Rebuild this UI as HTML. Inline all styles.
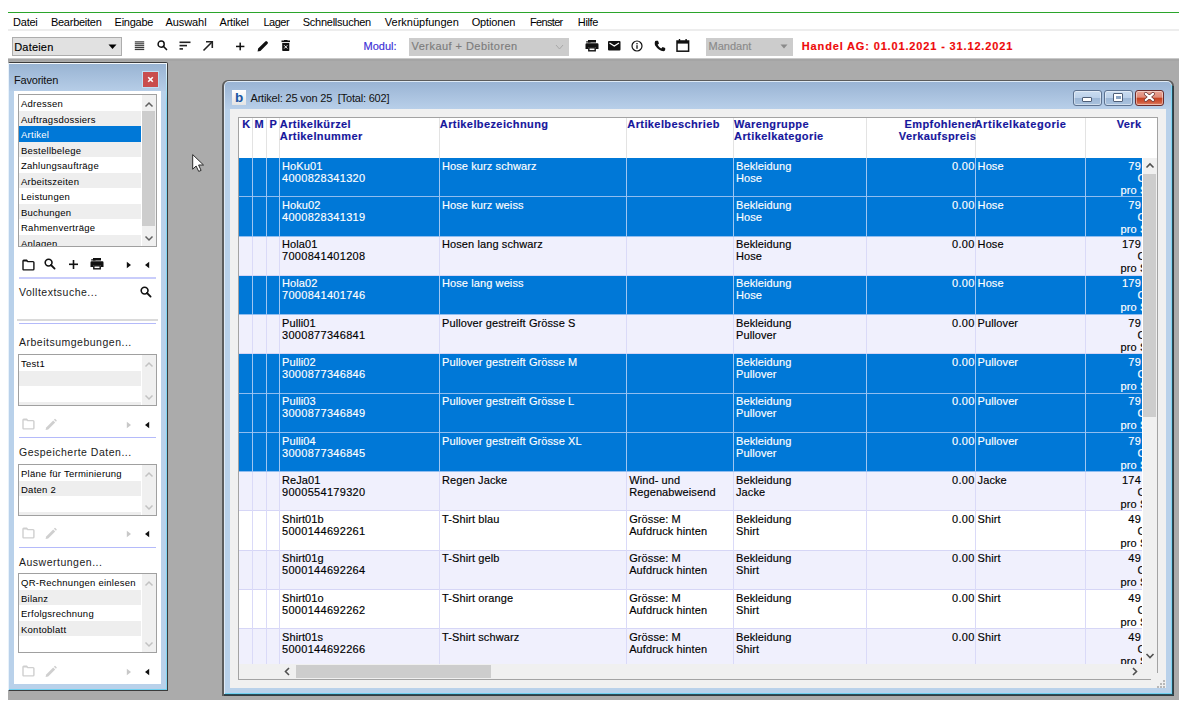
<!DOCTYPE html><html><head><meta charset="utf-8"><style>
*{box-sizing:border-box;margin:0;padding:0}
html,body{width:1187px;height:706px;overflow:hidden;background:#fff}
body{position:relative;font-family:"Liberation Sans",sans-serif;color:#000}
.ab{position:absolute}
.t{position:absolute;white-space:pre;line-height:12px}
.v{font-size:11px;letter-spacing:0.1px;-webkit-text-stroke:0.15px}
.vd{letter-spacing:0.3px}
.vb{font-size:11px;font-weight:bold;letter-spacing:0.4px;-webkit-text-stroke:0.15px}
.menu{font-size:11px;letter-spacing:-0.25px;line-height:13px;color:#000}
.sb{font-size:9.5px;letter-spacing:0.25px;line-height:12px}
</style></head><body>
<div class="ab" style="left:8px;top:12px;width:1171px;height:1px;background:#2ba52b"></div>
<div class="t menu" style="left:13.1px;top:15.5px;letter-spacing:-0.25px">Datei</div>
<div class="t menu" style="left:50.9px;top:15.5px;letter-spacing:-0.25px">Bearbeiten</div>
<div class="t menu" style="left:114.6px;top:15.5px;letter-spacing:-0.25px">Eingabe</div>
<div class="t menu" style="left:165.6px;top:15.5px;letter-spacing:-0.10px">Auswahl</div>
<div class="t menu" style="left:219.5px;top:15.5px;letter-spacing:-0.20px">Artikel</div>
<div class="t menu" style="left:263.5px;top:15.5px;letter-spacing:-0.50px">Lager</div>
<div class="t menu" style="left:302.7px;top:15.5px;letter-spacing:-0.25px">Schnellsuchen</div>
<div class="t menu" style="left:384.8px;top:15.5px;letter-spacing:0.00px">Verknüpfungen</div>
<div class="t menu" style="left:471.7px;top:15.5px;letter-spacing:-0.15px">Optionen</div>
<div class="t menu" style="left:529.9px;top:15.5px;letter-spacing:-0.65px">Fenster</div>
<div class="t menu" style="left:577.8px;top:15.5px;letter-spacing:-0.35px">Hilfe</div>
<div class="ab" style="left:8px;top:29px;width:1171px;height:2px;background:#ededed"></div>
<div class="ab" style="left:12px;top:37px;width:110px;height:19px;background:#e1e1e1;border:1px solid #adadad"></div>
<div class="t v" style="left:14.2px;top:40.5px;letter-spacing:0.2px">Dateien</div>
<svg class="ab" style="left:108px;top:44px" width="9" height="6"><path d="M0.5 0.5 L8.5 0.5 L4.5 5 Z" fill="#000"/></svg>
<svg class="ab" style="left:134px;top:41px" width="11" height="10" viewBox="0 0 11 10" ><rect x="0.8" y="0.3" width="9.4" height="1.2" fill="#3a3a3a"/><rect x="0.8" y="2.1999999999999997" width="9.4" height="1.2" fill="#3a3a3a"/><rect x="0.8" y="4.1" width="9.4" height="1.2" fill="#3a3a3a"/><rect x="0.8" y="5.999999999999999" width="9.4" height="1.2" fill="#3a3a3a"/><rect x="0.8" y="7.8999999999999995" width="9.4" height="1.2" fill="#3a3a3a"/></svg>
<svg class="ab" style="left:156.5px;top:39.8px" width="12" height="12" viewBox="0 0 12 12" ><g transform="scale(0.9)"><circle cx="4.6" cy="4.6" r="3.4" fill="none" stroke="#111" stroke-width="1.6"/><path d="M7 7 L10.6 10.6" stroke="#111" stroke-width="1.8" stroke-linecap="round"/></g></svg>
<svg class="ab" style="left:179px;top:41px" width="12" height="10" viewBox="0 0 12 10" ><rect x="0.5" y="0.5" width="11" height="1.6" fill="#222"/><rect x="0.5" y="3.8" width="7.5" height="1.6" fill="#222"/><rect x="0.5" y="7.1" width="3.5" height="1.6" fill="#222"/></svg>
<svg class="ab" style="left:202px;top:40px" width="12" height="12" viewBox="0 0 12 12" ><path d="M1.5 10.5 L10 2" stroke="#222" stroke-width="1.6"/><path d="M4 1.8 L10.3 1.8 L10.3 8" fill="none" stroke="#222" stroke-width="1.6"/></svg>
<svg class="ab" style="left:235px;top:42px" width="10" height="9" viewBox="0 0 10 9" ><rect x="1" y="3.7" width="8.4" height="1.5" fill="#111"/><rect x="4.45" y="0.6" width="1.5" height="7.7" fill="#111"/></svg>
<svg class="ab" style="left:257px;top:40px" width="12" height="12" viewBox="0 0 12 12" ><path d="M0.6 11.4 L1.1 8.6 L8.3 1.4 Q9.2 0.6 10 1.4 L10.6 2 Q11.4 2.8 10.6 3.7 L3.4 10.9 Z" fill="#111"/></svg>
<svg class="ab" style="left:281px;top:40px" width="10" height="12" viewBox="0 0 10 12" ><rect x="0.5" y="0.5" width="8.5" height="1.6" fill="#111"/><rect x="3" y="0" width="3.5" height="1" fill="#111"/><path d="M1.2 3 H8.3 V10.2 Q8.3 11 7.5 11 H2 Q1.2 11 1.2 10.2 Z" fill="#111"/><path d="M3.2 5.3 L6.3 8.5 M6.3 5.3 L3.2 8.5" stroke="#fff" stroke-width="1"/></svg>
<div class="t v" style="left:363.5px;top:40.3px;color:#3b2ed6;letter-spacing:0px">Modul:</div>
<div class="ab" style="left:409px;top:38px;width:160px;height:18px;background:#cccccc"></div>
<div class="t v" style="left:411.6px;top:40.3px;color:#7c7c7c;letter-spacing:0.45px">Verkauf + Debitoren</div>
<svg class="ab" style="left:555px;top:44px" width="10" height="7" viewBox="0 0 10 7" ><path d="M1 1 L4.5 5 L8 1" fill="none" stroke="#a8a8a8" stroke-width="1"/></svg>
<svg class="ab" style="left:585px;top:40px" width="14" height="12" viewBox="0 0 14 12" ><rect x="3" y="0" width="8" height="2.5" fill="#111"/><path d="M1.6 3.2 H12.4 Q13.5 3.2 13.5 4.5 V9 H11 V7 H3 V9 H0.5 V4.5 Q0.5 3.2 1.6 3.2 Z" fill="#111"/><rect x="3.8" y="7.8" width="6.4" height="3" fill="none" stroke="#111" stroke-width="1.4"/><path d="M1.2 1.2 H4.6 L5.8 2.6 H1.2 Z" fill="#111"/></svg>
<svg class="ab" style="left:608px;top:41px" width="13" height="10" viewBox="0 0 13 10" ><rect x="0" y="0" width="12.5" height="9.5" rx="1" fill="#111"/><path d="M1.5 2 L6.25 5 L11 2" fill="none" stroke="#fff" stroke-width="1.2"/></svg>
<svg class="ab" style="left:631px;top:40px" width="13" height="12" viewBox="0 0 13 12" ><circle cx="6" cy="6" r="5" fill="none" stroke="#111" stroke-width="1.2"/><rect x="5.35" y="5.2" width="1.3" height="3.6" fill="#111"/><rect x="5.35" y="3" width="1.3" height="1.3" fill="#111"/></svg>
<svg class="ab" style="left:654px;top:40px" width="12" height="12" viewBox="0 0 12 12" ><path d="M2.2 0.8 L4 0.8 L5 3.4 L3.6 4.8 Q5 7.6 7.2 8.4 L8.6 7 L11.2 8 L11.2 9.8 Q11 11.2 9.6 11.2 Q4.5 10.6 1 5.2 Q0.6 3.6 0.8 2.2 Q1 0.8 2.2 0.8 Z" fill="#111"/></svg>
<svg class="ab" style="left:676px;top:39px" width="14" height="13" viewBox="0 0 14 13" ><rect x="1" y="2" width="11.6" height="10.2" fill="none" stroke="#111" stroke-width="1.5"/><rect x="1" y="2" width="11.6" height="2.6" fill="#111"/><rect x="2.8" y="0" width="1.4" height="2.5" fill="#111"/><rect x="9.4" y="0" width="1.4" height="2.5" fill="#111"/></svg>
<div class="ab" style="left:706px;top:38px;width:87px;height:18px;background:#cccccc"></div>
<div class="t v" style="left:708.5px;top:40.3px;color:#8a8a8a;letter-spacing:0px">Mandant</div>
<svg class="ab" style="left:780px;top:44px" width="8" height="5" viewBox="0 0 8 5" ><path d="M0.5 0.5 L7.5 0.5 L4 4.5 Z" fill="#8a8a8a"/></svg>
<div class="t vb" style="left:801.8px;top:40.3px;color:#ee0a0a;letter-spacing:0.85px">Handel AG: 01.01.2021 - 31.12.2021</div>
<div class="ab" style="left:8px;top:58px;width:1171px;height:642px;background:#ababab"></div>
<div class="ab" style="left:8px;top:58px;width:1171px;height:1px;background:#c9c9c9"></div>
<div class="ab" style="left:8px;top:59px;width:1171px;height:2px;background:#a5a5a5"></div>
<div class="ab" style="left:8px;top:62px;width:160px;height:629px;background:#b9d1ea;border-top:1px solid #3c3c3c;border-right:1px solid #3c3c3c;border-bottom:1px solid #3c3c3c;border-left:1px solid #e8f2fb;border-radius:2px 2px 0 0"></div>
<div class="ab" style="left:9px;top:63px;width:158px;height:1px;background:#f4f8fc"></div>
<div class="ab" style="left:166px;top:63px;width:1px;height:627px;background:linear-gradient(#f4f8fc 0px,#7fd6f2 40px,#7fd6f2 100%)"></div>
<div class="ab" style="left:9px;top:689px;width:158px;height:1px;background:#6fd0f0"></div>
<div class="ab" style="left:9px;top:64px;width:157px;height:27px;background:linear-gradient(#99b4d3,#b6cde7)"></div>
<div class="t" style="left:14px;top:74px;font-size:11px;line-height:13px;letter-spacing:-0.2px;color:#101010">Favoriten</div>
<div class="ab" style="left:143px;top:72px;width:15px;height:15px;background:#c94d4d;box-shadow:0 0 0 1px #bfe0f5"></div>
<svg class="ab" style="left:146px;top:75px" width="9" height="9" viewBox="0 0 9 9" ><path d="M2.2 2.2 L6.8 6.8 M6.8 2.2 L2.2 6.8" stroke="#fff" stroke-width="1.6"/></svg>
<div class="ab" style="left:14px;top:91px;width:147px;height:593px;background:#fff"></div>
<div class="ab" style="left:18px;top:94px;width:139px;height:153px;border:1px solid #a0a0a0;background:#fff;overflow:hidden">
<div class="ab" style="left:0;top:0.0px;width:122px;height:15.5px;background:#ffffff"></div>
<div class="t sb" style="left:2px;top:3.2px;color:#000">Adressen</div>
<div class="ab" style="left:0;top:15.5px;width:122px;height:15.5px;background:#eeeeee"></div>
<div class="t sb" style="left:2px;top:18.7px;color:#000">Auftragsdossiers</div>
<div class="ab" style="left:0;top:31.0px;width:122px;height:15.5px;background:#0078d7"></div>
<div class="t sb" style="left:2px;top:34.2px;color:#fff">Artikel</div>
<div class="ab" style="left:0;top:46.5px;width:122px;height:15.5px;background:#eeeeee"></div>
<div class="t sb" style="left:2px;top:49.7px;color:#000">Bestellbelege</div>
<div class="ab" style="left:0;top:62.0px;width:122px;height:15.5px;background:#ffffff"></div>
<div class="t sb" style="left:2px;top:65.2px;color:#000">Zahlungsaufträge</div>
<div class="ab" style="left:0;top:77.5px;width:122px;height:15.5px;background:#eeeeee"></div>
<div class="t sb" style="left:2px;top:80.7px;color:#000">Arbeitszeiten</div>
<div class="ab" style="left:0;top:93.0px;width:122px;height:15.5px;background:#ffffff"></div>
<div class="t sb" style="left:2px;top:96.2px;color:#000">Leistungen</div>
<div class="ab" style="left:0;top:108.5px;width:122px;height:15.5px;background:#eeeeee"></div>
<div class="t sb" style="left:2px;top:111.7px;color:#000">Buchungen</div>
<div class="ab" style="left:0;top:124.0px;width:122px;height:15.5px;background:#ffffff"></div>
<div class="t sb" style="left:2px;top:127.2px;color:#000">Rahmenverträge</div>
<div class="ab" style="left:0;top:139.5px;width:122px;height:15.5px;background:#eeeeee"></div>
<div class="t sb" style="left:2px;top:142.7px;color:#000">Anlagen</div>
<div class="ab" style="left:122.5px;top:0;width:15px;height:153px;background:#f0f0f0"></div>
<svg class="ab" style="left:125px;top:6px" width="10" height="7"><path d="M1.5 5.5 L5 2 L8.5 5.5" fill="none" stroke="#606060" stroke-width="1.5"/></svg>
<svg class="ab" style="left:125px;top:140px" width="10" height="7"><path d="M1.5 1.5 L5 5 L8.5 1.5" fill="none" stroke="#606060" stroke-width="1.5"/></svg>
<div class="ab" style="left:122.5px;top:16px;width:13px;height:115px;background:#cdcdcd"></div>
</div>
<svg class="ab" style="left:22px;top:259px" width="13" height="12" viewBox="0 0 13 12" ><path d="M1.8 1.2 H4.6 L5.8 2.6 H11 Q11.9 2.6 11.9 3.5 V10 Q11.9 10.9 11 10.9 H1.9 Q1 10.9 1 10 V2 Q1 1.2 1.8 1.2 Z" fill="none" stroke="#111" stroke-width="1.4"/><path d="M1.2 1.2 H4.6 L5.8 2.6 H1.2 Z" fill="#111"/></svg>
<svg class="ab" style="left:44px;top:258px" width="12" height="12" viewBox="0 0 12 12" ><g transform="scale(1.0)"><circle cx="4.6" cy="4.6" r="3.4" fill="none" stroke="#111" stroke-width="1.6"/><path d="M7 7 L10.6 10.6" stroke="#111" stroke-width="1.8" stroke-linecap="round"/></g></svg>
<svg class="ab" style="left:68px;top:259px" width="11" height="11" viewBox="0 0 11 11" ><rect x="1" y="4.5" width="9" height="1.6" fill="#111"/><rect x="4.7" y="1" width="1.6" height="9" fill="#111"/></svg>
<svg class="ab" style="left:90px;top:258px" width="14" height="12" viewBox="0 0 14 12" ><rect x="3" y="0" width="8" height="2.5" fill="#111"/><path d="M1.6 3.2 H12.4 Q13.5 3.2 13.5 4.5 V9 H11 V7 H3 V9 H0.5 V4.5 Q0.5 3.2 1.6 3.2 Z" fill="#111"/><rect x="3.8" y="7.8" width="6.4" height="3" fill="none" stroke="#111" stroke-width="1.4"/><path d="M1.2 1.2 H4.6 L5.8 2.6 H1.2 Z" fill="#111"/></svg>
<svg class="ab" style="left:126px;top:261px" width="6" height="8" viewBox="0 0 6 8" ><path d="M0.8 0.8 L5 4 L0.8 7.2 Z" fill="#111"/></svg>
<svg class="ab" style="left:144px;top:261px" width="6" height="8" viewBox="0 0 6 8" ><path d="M5.2 0.8 L1 4 L5.2 7.2 Z" fill="#111"/></svg>
<div class="ab" style="left:19px;top:277px;width:137px;height:2px;background:#c9cdfb"></div>
<div class="t" style="left:19px;top:286px;font-size:10.5px;line-height:12px;letter-spacing:0.5px;color:#1a1a1a">Volltextsuche...</div>
<svg class="ab" style="left:140px;top:286px" width="12" height="12" viewBox="0 0 12 12" ><g transform="scale(1.0)"><circle cx="4.6" cy="4.6" r="3.4" fill="none" stroke="#111" stroke-width="1.6"/><path d="M7 7 L10.6 10.6" stroke="#111" stroke-width="1.8" stroke-linecap="round"/></g></svg>
<div class="ab" style="left:17px;top:319px;width:141px;height:2px;background:#dadada"></div>
<div class="ab" style="left:19px;top:323px;width:137px;height:1px;background:#b4bafa"></div>
<div class="t" style="left:19px;top:336px;font-size:10.5px;line-height:12px;letter-spacing:0.5px;color:#1a1a1a">Arbeitsumgebungen...</div>
<div class="ab" style="left:18px;top:354px;width:139px;height:52px;border:1px solid #a0a0a0;background:#fff;overflow:hidden">
<div class="ab" style="left:0;top:0.0px;width:122px;height:15.5px;background:#ffffff"></div>
<div class="t sb" style="left:2px;top:3.2px;color:#000">Test1</div>
<div class="ab" style="left:0;top:15.5px;width:122px;height:15.5px;background:#eeeeee"></div>
<div class="ab" style="left:0;top:31.0px;width:122px;height:15.5px;background:#ffffff"></div>
<div class="ab" style="left:0;top:46.5px;width:122px;height:15.5px;background:#eeeeee"></div>
<div class="ab" style="left:122.5px;top:0;width:15px;height:52px;background:#f0f0f0"></div>
<svg class="ab" style="left:125px;top:6px" width="10" height="7"><path d="M1.5 5.5 L5 2 L8.5 5.5" fill="none" stroke="#c2c2c2" stroke-width="1.5"/></svg>
<svg class="ab" style="left:125px;top:39px" width="10" height="7"><path d="M1.5 1.5 L5 5 L8.5 1.5" fill="none" stroke="#c2c2c2" stroke-width="1.5"/></svg>
</div>
<svg class="ab" style="left:22px;top:418px" width="13" height="12" viewBox="0 0 13 12" ><path d="M1.8 1.2 H4.6 L5.8 2.6 H11 Q11.9 2.6 11.9 3.5 V10 Q11.9 10.9 11 10.9 H1.9 Q1 10.9 1 10 V2 Q1 1.2 1.8 1.2 Z" fill="none" stroke="#cfcfcf" stroke-width="1.4"/><path d="M1.2 1.2 H4.6 L5.8 2.6 H1.2 Z" fill="#cfcfcf"/></svg>
<svg class="ab" style="left:45px;top:418px" width="12" height="13" viewBox="0 0 12 13" ><path d="M0.6 12 L1.2 9.4 L8.2 2.4 L10.2 4.4 L3.2 11.4 Z" fill="#cfcfcf"/><path d="M8.9 1.7 L9.6 1 Q10 0.6 10.4 1 L11.6 2.2 Q12 2.6 11.6 3 L10.9 3.7 Z" fill="#cfcfcf"/></svg>
<svg class="ab" style="left:126px;top:421px" width="6" height="8" viewBox="0 0 6 8" ><path d="M0.8 0.8 L5 4 L0.8 7.2 Z" fill="#c8c8c8"/></svg>
<svg class="ab" style="left:144px;top:421px" width="6" height="8" viewBox="0 0 6 8" ><path d="M5.2 0.8 L1 4 L5.2 7.2 Z" fill="#111"/></svg>
<div class="ab" style="left:19px;top:437px;width:137px;height:1px;background:#b4bafa"></div>
<div class="t" style="left:19px;top:446px;font-size:10.5px;line-height:12px;letter-spacing:0.5px;color:#1a1a1a">Gespeicherte Daten...</div>
<div class="ab" style="left:18px;top:464px;width:139px;height:52px;border:1px solid #a0a0a0;background:#fff;overflow:hidden">
<div class="ab" style="left:0;top:0.0px;width:122px;height:15.5px;background:#ffffff"></div>
<div class="t sb" style="left:2px;top:3.2px;color:#000">Pläne für Terminierung</div>
<div class="ab" style="left:0;top:15.5px;width:122px;height:15.5px;background:#eeeeee"></div>
<div class="t sb" style="left:2px;top:18.7px;color:#000">Daten 2</div>
<div class="ab" style="left:0;top:31.0px;width:122px;height:15.5px;background:#ffffff"></div>
<div class="ab" style="left:0;top:46.5px;width:122px;height:15.5px;background:#eeeeee"></div>
<div class="ab" style="left:122.5px;top:0;width:15px;height:52px;background:#f0f0f0"></div>
<svg class="ab" style="left:125px;top:6px" width="10" height="7"><path d="M1.5 5.5 L5 2 L8.5 5.5" fill="none" stroke="#c2c2c2" stroke-width="1.5"/></svg>
<svg class="ab" style="left:125px;top:39px" width="10" height="7"><path d="M1.5 1.5 L5 5 L8.5 1.5" fill="none" stroke="#c2c2c2" stroke-width="1.5"/></svg>
</div>
<svg class="ab" style="left:22px;top:527px" width="13" height="12" viewBox="0 0 13 12" ><path d="M1.8 1.2 H4.6 L5.8 2.6 H11 Q11.9 2.6 11.9 3.5 V10 Q11.9 10.9 11 10.9 H1.9 Q1 10.9 1 10 V2 Q1 1.2 1.8 1.2 Z" fill="none" stroke="#cfcfcf" stroke-width="1.4"/><path d="M1.2 1.2 H4.6 L5.8 2.6 H1.2 Z" fill="#cfcfcf"/></svg>
<svg class="ab" style="left:45px;top:527px" width="12" height="13" viewBox="0 0 12 13" ><path d="M0.6 12 L1.2 9.4 L8.2 2.4 L10.2 4.4 L3.2 11.4 Z" fill="#cfcfcf"/><path d="M8.9 1.7 L9.6 1 Q10 0.6 10.4 1 L11.6 2.2 Q12 2.6 11.6 3 L10.9 3.7 Z" fill="#cfcfcf"/></svg>
<svg class="ab" style="left:126px;top:530px" width="6" height="8" viewBox="0 0 6 8" ><path d="M0.8 0.8 L5 4 L0.8 7.2 Z" fill="#c8c8c8"/></svg>
<svg class="ab" style="left:144px;top:530px" width="6" height="8" viewBox="0 0 6 8" ><path d="M5.2 0.8 L1 4 L5.2 7.2 Z" fill="#111"/></svg>
<div class="ab" style="left:19px;top:547px;width:137px;height:1px;background:#b4bafa"></div>
<div class="t" style="left:19px;top:556px;font-size:10.5px;line-height:12px;letter-spacing:0.5px;color:#1a1a1a">Auswertungen...</div>
<div class="ab" style="left:18px;top:573px;width:139px;height:80px;border:1px solid #a0a0a0;background:#fff;overflow:hidden">
<div class="ab" style="left:0;top:0.0px;width:122px;height:15.5px;background:#ffffff"></div>
<div class="t sb" style="left:2px;top:3.2px;color:#000">QR-Rechnungen einlesen</div>
<div class="ab" style="left:0;top:15.5px;width:122px;height:15.5px;background:#eeeeee"></div>
<div class="t sb" style="left:2px;top:18.7px;color:#000">Bilanz</div>
<div class="ab" style="left:0;top:31.0px;width:122px;height:15.5px;background:#ffffff"></div>
<div class="t sb" style="left:2px;top:34.2px;color:#000">Erfolgsrechnung</div>
<div class="ab" style="left:0;top:46.5px;width:122px;height:15.5px;background:#eeeeee"></div>
<div class="t sb" style="left:2px;top:49.7px;color:#000">Kontoblatt</div>
<div class="ab" style="left:0;top:62.0px;width:122px;height:15.5px;background:#ffffff"></div>
<div class="ab" style="left:0;top:77.5px;width:122px;height:15.5px;background:#eeeeee"></div>
<div class="ab" style="left:122.5px;top:0;width:15px;height:80px;background:#f0f0f0"></div>
<svg class="ab" style="left:125px;top:6px" width="10" height="7"><path d="M1.5 5.5 L5 2 L8.5 5.5" fill="none" stroke="#c2c2c2" stroke-width="1.5"/></svg>
<svg class="ab" style="left:125px;top:67px" width="10" height="7"><path d="M1.5 1.5 L5 5 L8.5 1.5" fill="none" stroke="#c2c2c2" stroke-width="1.5"/></svg>
</div>
<svg class="ab" style="left:22px;top:665px" width="13" height="12" viewBox="0 0 13 12" ><path d="M1.8 1.2 H4.6 L5.8 2.6 H11 Q11.9 2.6 11.9 3.5 V10 Q11.9 10.9 11 10.9 H1.9 Q1 10.9 1 10 V2 Q1 1.2 1.8 1.2 Z" fill="none" stroke="#cfcfcf" stroke-width="1.4"/><path d="M1.2 1.2 H4.6 L5.8 2.6 H1.2 Z" fill="#cfcfcf"/></svg>
<svg class="ab" style="left:45px;top:665px" width="12" height="13" viewBox="0 0 12 13" ><path d="M0.6 12 L1.2 9.4 L8.2 2.4 L10.2 4.4 L3.2 11.4 Z" fill="#cfcfcf"/><path d="M8.9 1.7 L9.6 1 Q10 0.6 10.4 1 L11.6 2.2 Q12 2.6 11.6 3 L10.9 3.7 Z" fill="#cfcfcf"/></svg>
<svg class="ab" style="left:126px;top:668px" width="6" height="8" viewBox="0 0 6 8" ><path d="M0.8 0.8 L5 4 L0.8 7.2 Z" fill="#c8c8c8"/></svg>
<svg class="ab" style="left:144px;top:668px" width="6" height="8" viewBox="0 0 6 8" ><path d="M5.2 0.8 L1 4 L5.2 7.2 Z" fill="#111"/></svg>
<svg class="ab" style="left:191px;top:153px" width="14" height="20" viewBox="0 0 14 20" ><path d="M1.7 1.6 L1.7 16.2 L5.1 13 L7.7 18.4 L10.1 17.4 L7.6 12 L12.5 12 Z" fill="#fff" stroke="#2a2a2a" stroke-width="1" stroke-linejoin="round"/></svg>
<div class="ab" style="left:222px;top:80px;width:952px;height:616px;background:#5c5c5c;border-radius:6px 6px 0 0"></div>
<div class="ab" style="left:1172px;top:86px;width:2px;height:610px;background:linear-gradient(90deg,#1f5565,#3c3434)"></div>
<div class="ab" style="left:224px;top:694px;width:950px;height:2px;background:linear-gradient(#1f5565,#3c3434)"></div>
<div class="ab" style="left:224px;top:81px;width:948px;height:613px;background:#dfeaf5;border-radius:5px 5px 0 0"></div>
<div class="ab" style="left:1171px;top:85px;width:1px;height:609px;background:#7fd5f3"></div>
<div class="ab" style="left:225px;top:693px;width:947px;height:1px;background:#6fd0f0"></div>
<div class="ab" style="left:225px;top:82px;width:946px;height:611px;background:#b9d1ea;border-radius:4px 4px 0 0"></div>
<div class="ab" style="left:225px;top:82px;width:946px;height:27px;background:linear-gradient(#9ab4d4,#b8cfe9);border-radius:4px 4px 0 0"></div>
<div class="ab" style="left:232px;top:90px;width:14px;height:15px;background:linear-gradient(#ffffff,#e4e4e4)"></div>
<div class="t" style="left:235px;top:89.5px;font-size:13.5px;line-height:15px;font-weight:bold;color:#1a56a4">b</div>
<div class="t" style="left:250.5px;top:91.5px;font-size:11px;line-height:13px;letter-spacing:-0.19px;color:#111">Artikel: 25 von 25  [Total: 602]</div>
<div class="ab" style="left:1073px;top:89.5px;width:29px;height:16px;background:linear-gradient(#cadcf0 0%,#bcd1ea 48%,#9db7d6 52%,#a9c2de 100%);border:1px solid #5d7290;border-radius:3px;box-shadow:inset 0 0 0 1px rgba(255,255,255,0.45)"></div>
<div class="ab" style="left:1104px;top:89.5px;width:29px;height:16px;background:linear-gradient(#cadcf0 0%,#bcd1ea 48%,#9db7d6 52%,#a9c2de 100%);border:1px solid #5d7290;border-radius:3px;box-shadow:inset 0 0 0 1px rgba(255,255,255,0.45)"></div>
<div class="ab" style="left:1135px;top:89.5px;width:29px;height:16px;background:linear-gradient(#e9a495 0%,#e08a78 45%,#c6401f 50%,#d0593c 80%,#e08a70 100%);border:1px solid #6b2b2b;border-radius:3px;box-shadow:inset 0 0 0 1px rgba(255,255,255,0.45)"></div>
<div class="ab" style="left:1082px;top:97px;width:10px;height:4.5px;background:#fff;border:1px solid #4f5f78;border-radius:1px"></div>
<div class="ab" style="left:1113px;top:93px;width:10px;height:8.5px;background:#fff;border:1px solid #4f5f78;border-radius:1px"></div>
<div class="ab" style="left:1115.5px;top:95.5px;width:5px;height:3.5px;background:#8aa4c4"></div>
<svg class="ab" style="left:1143px;top:92px" width="13" height="10" viewBox="0 0 13 10" ><path d="M2.8 1.8 L10 8 M10 1.8 L2.8 8" stroke="#6a3a3a" stroke-width="3.6" stroke-linecap="round"/><path d="M2.8 1.8 L10 8 M10 1.8 L2.8 8" stroke="#fff" stroke-width="2.2" stroke-linecap="round"/></svg>
<div class="ab" style="left:230px;top:109px;width:936px;height:579px;background:#f0f0f0"></div>
<div class="ab" style="left:238px;top:117px;width:920px;height:563px;border:1px solid #a3a3a3;background:#fff"></div>
<div class="ab" style="left:252px;top:118px;width:1px;height:40px;background:#e3e3e3"></div>
<div class="ab" style="left:266px;top:118px;width:1px;height:40px;background:#e3e3e3"></div>
<div class="ab" style="left:279px;top:118px;width:1px;height:40px;background:#e3e3e3"></div>
<div class="ab" style="left:439px;top:118px;width:1px;height:40px;background:#e3e3e3"></div>
<div class="ab" style="left:626px;top:118px;width:1px;height:40px;background:#e3e3e3"></div>
<div class="ab" style="left:733px;top:118px;width:1px;height:40px;background:#e3e3e3"></div>
<div class="ab" style="left:866px;top:118px;width:1px;height:40px;background:#e3e3e3"></div>
<div class="ab" style="left:975px;top:118px;width:1px;height:40px;background:#e3e3e3"></div>
<div class="ab" style="left:1085px;top:118px;width:1px;height:40px;background:#e3e3e3"></div>
<div class="t vb" style="left:242.2px;top:118px;color:#16169c">K</div>
<div class="t vb" style="left:254.6px;top:118px;color:#16169c">M</div>
<div class="t vb" style="left:269.4px;top:118px;color:#16169c">P</div>
<div class="t vb" style="left:279.8px;top:118px;color:#16169c">Artikelkürzel</div>
<div class="t vb" style="left:279.8px;top:130px;color:#16169c">Artikelnummer</div>
<div class="t vb" style="left:439.8px;top:118px;color:#16169c">Artikelbezeichnung</div>
<div class="t vb" style="left:627.3px;top:118px;color:#16169c">Artikelbeschrieb</div>
<div class="t vb" style="left:734.1px;top:118px;color:#16169c">Warengruppe</div>
<div class="t vb" style="left:734.1px;top:130px;color:#16169c">Artikelkategorie</div>
<div class="t vb" style="right:210.79999999999995px;top:118px;color:#16169c">Empfohlener</div>
<div class="t vb" style="right:210.79999999999995px;top:130px;color:#16169c">Verkaufspreis</div>
<div class="t vb" style="left:974.6px;top:118px;color:#16169c;letter-spacing:0.55px">Artikelkategorie</div>
<div class="t vb" style="right:45.5px;top:118px;color:#16169c">Verk</div>
<div class="ab" style="left:239px;top:158px;width:903px;height:505.79999999999995px;overflow:hidden">
<div class="ab" style="left:0;top:0.0px;width:904px;height:39.27px;background:#0078d7"></div>
<div class="ab" style="left:0;top:38.3px;width:904px;height:1px;background:#8fbdf0"></div>
<div class="ab" style="left:13px;top:0.0px;width:1px;height:39.27px;background:#9ec6f2"></div>
<div class="ab" style="left:27px;top:0.0px;width:1px;height:39.27px;background:#9ec6f2"></div>
<div class="ab" style="left:40px;top:0.0px;width:1px;height:39.27px;background:#9ec6f2"></div>
<div class="ab" style="left:200px;top:0.0px;width:1px;height:39.27px;background:#9ec6f2"></div>
<div class="ab" style="left:387px;top:0.0px;width:1px;height:39.27px;background:#9ec6f2"></div>
<div class="ab" style="left:494px;top:0.0px;width:1px;height:39.27px;background:#9ec6f2"></div>
<div class="ab" style="left:627px;top:0.0px;width:1px;height:39.27px;background:#9ec6f2"></div>
<div class="ab" style="left:736px;top:0.0px;width:1px;height:39.27px;background:#9ec6f2"></div>
<div class="ab" style="left:846px;top:0.0px;width:1px;height:39.27px;background:#9ec6f2"></div>
<div class="t v" style="left:43.0px;top:1.6px;color:#ffffff">HoKu01</div>
<div class="t v vd" style="left:43.0px;top:13.6px;color:#ffffff">4000828341320</div>
<div class="t v" style="left:203.0px;top:1.6px;color:#ffffff">Hose kurz schwarz</div>
<div class="t v" style="left:497.0px;top:1.6px;color:#ffffff">Bekleidung</div>
<div class="t v" style="left:497.0px;top:13.6px;color:#ffffff">Hose</div>
<div class="t v vd" style="right:167.4px;top:1.6px;color:#ffffff">0.00</div>
<div class="t v" style="left:738.6px;top:1.6px;color:#ffffff">Hose</div>
<div class="t v vd" style="right:0.8px;top:1.6px;color:#ffffff">79</div>
<div class="t v" style="left:898.4px;top:13.6px;color:#ffffff">CHF</div>
<div class="t v" style="left:881.6px;top:25.6px;color:#ffffff">pro Stk</div>
<div class="ab" style="left:0;top:39.3px;width:904px;height:39.27px;background:#0078d7"></div>
<div class="ab" style="left:0;top:77.5px;width:904px;height:1px;background:#8fbdf0"></div>
<div class="ab" style="left:13px;top:39.3px;width:1px;height:39.27px;background:#9ec6f2"></div>
<div class="ab" style="left:27px;top:39.3px;width:1px;height:39.27px;background:#9ec6f2"></div>
<div class="ab" style="left:40px;top:39.3px;width:1px;height:39.27px;background:#9ec6f2"></div>
<div class="ab" style="left:200px;top:39.3px;width:1px;height:39.27px;background:#9ec6f2"></div>
<div class="ab" style="left:387px;top:39.3px;width:1px;height:39.27px;background:#9ec6f2"></div>
<div class="ab" style="left:494px;top:39.3px;width:1px;height:39.27px;background:#9ec6f2"></div>
<div class="ab" style="left:627px;top:39.3px;width:1px;height:39.27px;background:#9ec6f2"></div>
<div class="ab" style="left:736px;top:39.3px;width:1px;height:39.27px;background:#9ec6f2"></div>
<div class="ab" style="left:846px;top:39.3px;width:1px;height:39.27px;background:#9ec6f2"></div>
<div class="t v" style="left:43.0px;top:40.9px;color:#ffffff">Hoku02</div>
<div class="t v vd" style="left:43.0px;top:52.9px;color:#ffffff">4000828341319</div>
<div class="t v" style="left:203.0px;top:40.9px;color:#ffffff">Hose kurz weiss</div>
<div class="t v" style="left:497.0px;top:40.9px;color:#ffffff">Bekleidung</div>
<div class="t v" style="left:497.0px;top:52.9px;color:#ffffff">Hose</div>
<div class="t v vd" style="right:167.4px;top:40.9px;color:#ffffff">0.00</div>
<div class="t v" style="left:738.6px;top:40.9px;color:#ffffff">Hose</div>
<div class="t v vd" style="right:0.8px;top:40.9px;color:#ffffff">79</div>
<div class="t v" style="left:898.4px;top:52.9px;color:#ffffff">CHF</div>
<div class="t v" style="left:881.6px;top:64.9px;color:#ffffff">pro Stk</div>
<div class="ab" style="left:0;top:78.5px;width:904px;height:39.27px;background:#f0f0fd"></div>
<div class="ab" style="left:0;top:116.8px;width:904px;height:1px;background:#d6d6f6"></div>
<div class="ab" style="left:13px;top:78.5px;width:1px;height:39.27px;background:#dadaf8"></div>
<div class="ab" style="left:27px;top:78.5px;width:1px;height:39.27px;background:#dadaf8"></div>
<div class="ab" style="left:40px;top:78.5px;width:1px;height:39.27px;background:#dadaf8"></div>
<div class="ab" style="left:200px;top:78.5px;width:1px;height:39.27px;background:#dadaf8"></div>
<div class="ab" style="left:387px;top:78.5px;width:1px;height:39.27px;background:#dadaf8"></div>
<div class="ab" style="left:494px;top:78.5px;width:1px;height:39.27px;background:#dadaf8"></div>
<div class="ab" style="left:627px;top:78.5px;width:1px;height:39.27px;background:#dadaf8"></div>
<div class="ab" style="left:736px;top:78.5px;width:1px;height:39.27px;background:#dadaf8"></div>
<div class="ab" style="left:846px;top:78.5px;width:1px;height:39.27px;background:#dadaf8"></div>
<div class="t v" style="left:43.0px;top:80.1px;color:#000">Hola01</div>
<div class="t v vd" style="left:43.0px;top:92.1px;color:#000">7000841401208</div>
<div class="t v" style="left:203.0px;top:80.1px;color:#000">Hosen lang schwarz</div>
<div class="t v" style="left:497.0px;top:80.1px;color:#000">Bekleidung</div>
<div class="t v" style="left:497.0px;top:92.1px;color:#000">Hose</div>
<div class="t v vd" style="right:167.4px;top:80.1px;color:#000">0.00</div>
<div class="t v" style="left:738.6px;top:80.1px;color:#000">Hose</div>
<div class="t v vd" style="right:0.8px;top:80.1px;color:#000">179</div>
<div class="t v" style="left:898.4px;top:92.1px;color:#000">CHF</div>
<div class="t v" style="left:881.6px;top:104.1px;color:#000">pro Stk</div>
<div class="ab" style="left:0;top:117.8px;width:904px;height:39.27px;background:#0078d7"></div>
<div class="ab" style="left:0;top:156.1px;width:904px;height:1px;background:#8fbdf0"></div>
<div class="ab" style="left:13px;top:117.8px;width:1px;height:39.27px;background:#9ec6f2"></div>
<div class="ab" style="left:27px;top:117.8px;width:1px;height:39.27px;background:#9ec6f2"></div>
<div class="ab" style="left:40px;top:117.8px;width:1px;height:39.27px;background:#9ec6f2"></div>
<div class="ab" style="left:200px;top:117.8px;width:1px;height:39.27px;background:#9ec6f2"></div>
<div class="ab" style="left:387px;top:117.8px;width:1px;height:39.27px;background:#9ec6f2"></div>
<div class="ab" style="left:494px;top:117.8px;width:1px;height:39.27px;background:#9ec6f2"></div>
<div class="ab" style="left:627px;top:117.8px;width:1px;height:39.27px;background:#9ec6f2"></div>
<div class="ab" style="left:736px;top:117.8px;width:1px;height:39.27px;background:#9ec6f2"></div>
<div class="ab" style="left:846px;top:117.8px;width:1px;height:39.27px;background:#9ec6f2"></div>
<div class="t v" style="left:43.0px;top:119.4px;color:#ffffff">Hola02</div>
<div class="t v vd" style="left:43.0px;top:131.4px;color:#ffffff">7000841401746</div>
<div class="t v" style="left:203.0px;top:119.4px;color:#ffffff">Hose lang weiss</div>
<div class="t v" style="left:497.0px;top:119.4px;color:#ffffff">Bekleidung</div>
<div class="t v" style="left:497.0px;top:131.4px;color:#ffffff">Hose</div>
<div class="t v vd" style="right:167.4px;top:119.4px;color:#ffffff">0.00</div>
<div class="t v" style="left:738.6px;top:119.4px;color:#ffffff">Hose</div>
<div class="t v vd" style="right:0.8px;top:119.4px;color:#ffffff">179</div>
<div class="t v" style="left:898.4px;top:131.4px;color:#ffffff">CHF</div>
<div class="t v" style="left:881.6px;top:143.4px;color:#ffffff">pro Stk</div>
<div class="ab" style="left:0;top:157.1px;width:904px;height:39.27px;background:#f0f0fd"></div>
<div class="ab" style="left:0;top:195.4px;width:904px;height:1px;background:#d6d6f6"></div>
<div class="ab" style="left:13px;top:157.1px;width:1px;height:39.27px;background:#dadaf8"></div>
<div class="ab" style="left:27px;top:157.1px;width:1px;height:39.27px;background:#dadaf8"></div>
<div class="ab" style="left:40px;top:157.1px;width:1px;height:39.27px;background:#dadaf8"></div>
<div class="ab" style="left:200px;top:157.1px;width:1px;height:39.27px;background:#dadaf8"></div>
<div class="ab" style="left:387px;top:157.1px;width:1px;height:39.27px;background:#dadaf8"></div>
<div class="ab" style="left:494px;top:157.1px;width:1px;height:39.27px;background:#dadaf8"></div>
<div class="ab" style="left:627px;top:157.1px;width:1px;height:39.27px;background:#dadaf8"></div>
<div class="ab" style="left:736px;top:157.1px;width:1px;height:39.27px;background:#dadaf8"></div>
<div class="ab" style="left:846px;top:157.1px;width:1px;height:39.27px;background:#dadaf8"></div>
<div class="t v" style="left:43.0px;top:158.7px;color:#000">Pulli01</div>
<div class="t v vd" style="left:43.0px;top:170.7px;color:#000">3000877346841</div>
<div class="t v" style="left:203.0px;top:158.7px;color:#000">Pullover gestreift Grösse S</div>
<div class="t v" style="left:497.0px;top:158.7px;color:#000">Bekleidung</div>
<div class="t v" style="left:497.0px;top:170.7px;color:#000">Pullover</div>
<div class="t v vd" style="right:167.4px;top:158.7px;color:#000">0.00</div>
<div class="t v" style="left:738.6px;top:158.7px;color:#000">Pullover</div>
<div class="t v vd" style="right:0.8px;top:158.7px;color:#000">79</div>
<div class="t v" style="left:898.4px;top:170.7px;color:#000">CHF</div>
<div class="t v" style="left:881.6px;top:182.7px;color:#000">pro Stk</div>
<div class="ab" style="left:0;top:196.4px;width:904px;height:39.27px;background:#0078d7"></div>
<div class="ab" style="left:0;top:234.6px;width:904px;height:1px;background:#8fbdf0"></div>
<div class="ab" style="left:13px;top:196.4px;width:1px;height:39.27px;background:#9ec6f2"></div>
<div class="ab" style="left:27px;top:196.4px;width:1px;height:39.27px;background:#9ec6f2"></div>
<div class="ab" style="left:40px;top:196.4px;width:1px;height:39.27px;background:#9ec6f2"></div>
<div class="ab" style="left:200px;top:196.4px;width:1px;height:39.27px;background:#9ec6f2"></div>
<div class="ab" style="left:387px;top:196.4px;width:1px;height:39.27px;background:#9ec6f2"></div>
<div class="ab" style="left:494px;top:196.4px;width:1px;height:39.27px;background:#9ec6f2"></div>
<div class="ab" style="left:627px;top:196.4px;width:1px;height:39.27px;background:#9ec6f2"></div>
<div class="ab" style="left:736px;top:196.4px;width:1px;height:39.27px;background:#9ec6f2"></div>
<div class="ab" style="left:846px;top:196.4px;width:1px;height:39.27px;background:#9ec6f2"></div>
<div class="t v" style="left:43.0px;top:198.0px;color:#ffffff">Pulli02</div>
<div class="t v vd" style="left:43.0px;top:210.0px;color:#ffffff">3000877346846</div>
<div class="t v" style="left:203.0px;top:198.0px;color:#ffffff">Pullover gestreift Grösse M</div>
<div class="t v" style="left:497.0px;top:198.0px;color:#ffffff">Bekleidung</div>
<div class="t v" style="left:497.0px;top:210.0px;color:#ffffff">Pullover</div>
<div class="t v vd" style="right:167.4px;top:198.0px;color:#ffffff">0.00</div>
<div class="t v" style="left:738.6px;top:198.0px;color:#ffffff">Pullover</div>
<div class="t v vd" style="right:0.8px;top:198.0px;color:#ffffff">79</div>
<div class="t v" style="left:898.4px;top:210.0px;color:#ffffff">CHF</div>
<div class="t v" style="left:881.6px;top:222.0px;color:#ffffff">pro Stk</div>
<div class="ab" style="left:0;top:235.6px;width:904px;height:39.27px;background:#0078d7"></div>
<div class="ab" style="left:0;top:273.9px;width:904px;height:1px;background:#8fbdf0"></div>
<div class="ab" style="left:13px;top:235.6px;width:1px;height:39.27px;background:#9ec6f2"></div>
<div class="ab" style="left:27px;top:235.6px;width:1px;height:39.27px;background:#9ec6f2"></div>
<div class="ab" style="left:40px;top:235.6px;width:1px;height:39.27px;background:#9ec6f2"></div>
<div class="ab" style="left:200px;top:235.6px;width:1px;height:39.27px;background:#9ec6f2"></div>
<div class="ab" style="left:387px;top:235.6px;width:1px;height:39.27px;background:#9ec6f2"></div>
<div class="ab" style="left:494px;top:235.6px;width:1px;height:39.27px;background:#9ec6f2"></div>
<div class="ab" style="left:627px;top:235.6px;width:1px;height:39.27px;background:#9ec6f2"></div>
<div class="ab" style="left:736px;top:235.6px;width:1px;height:39.27px;background:#9ec6f2"></div>
<div class="ab" style="left:846px;top:235.6px;width:1px;height:39.27px;background:#9ec6f2"></div>
<div class="t v" style="left:43.0px;top:237.2px;color:#ffffff">Pulli03</div>
<div class="t v vd" style="left:43.0px;top:249.2px;color:#ffffff">3000877346849</div>
<div class="t v" style="left:203.0px;top:237.2px;color:#ffffff">Pullover gestreift Grösse L</div>
<div class="t v" style="left:497.0px;top:237.2px;color:#ffffff">Bekleidung</div>
<div class="t v" style="left:497.0px;top:249.2px;color:#ffffff">Pullover</div>
<div class="t v vd" style="right:167.4px;top:237.2px;color:#ffffff">0.00</div>
<div class="t v" style="left:738.6px;top:237.2px;color:#ffffff">Pullover</div>
<div class="t v vd" style="right:0.8px;top:237.2px;color:#ffffff">79</div>
<div class="t v" style="left:898.4px;top:249.2px;color:#ffffff">CHF</div>
<div class="t v" style="left:881.6px;top:261.2px;color:#ffffff">pro Stk</div>
<div class="ab" style="left:0;top:274.9px;width:904px;height:39.27px;background:#0078d7"></div>
<div class="ab" style="left:0;top:313.2px;width:904px;height:1px;background:#8fbdf0"></div>
<div class="ab" style="left:13px;top:274.9px;width:1px;height:39.27px;background:#9ec6f2"></div>
<div class="ab" style="left:27px;top:274.9px;width:1px;height:39.27px;background:#9ec6f2"></div>
<div class="ab" style="left:40px;top:274.9px;width:1px;height:39.27px;background:#9ec6f2"></div>
<div class="ab" style="left:200px;top:274.9px;width:1px;height:39.27px;background:#9ec6f2"></div>
<div class="ab" style="left:387px;top:274.9px;width:1px;height:39.27px;background:#9ec6f2"></div>
<div class="ab" style="left:494px;top:274.9px;width:1px;height:39.27px;background:#9ec6f2"></div>
<div class="ab" style="left:627px;top:274.9px;width:1px;height:39.27px;background:#9ec6f2"></div>
<div class="ab" style="left:736px;top:274.9px;width:1px;height:39.27px;background:#9ec6f2"></div>
<div class="ab" style="left:846px;top:274.9px;width:1px;height:39.27px;background:#9ec6f2"></div>
<div class="t v" style="left:43.0px;top:276.5px;color:#ffffff">Pulli04</div>
<div class="t v vd" style="left:43.0px;top:288.5px;color:#ffffff">3000877346845</div>
<div class="t v" style="left:203.0px;top:276.5px;color:#ffffff">Pullover gestreift Grösse XL</div>
<div class="t v" style="left:497.0px;top:276.5px;color:#ffffff">Bekleidung</div>
<div class="t v" style="left:497.0px;top:288.5px;color:#ffffff">Pullover</div>
<div class="t v vd" style="right:167.4px;top:276.5px;color:#ffffff">0.00</div>
<div class="t v" style="left:738.6px;top:276.5px;color:#ffffff">Pullover</div>
<div class="t v vd" style="right:0.8px;top:276.5px;color:#ffffff">79</div>
<div class="t v" style="left:898.4px;top:288.5px;color:#ffffff">CHF</div>
<div class="t v" style="left:881.6px;top:300.5px;color:#ffffff">pro Stk</div>
<div class="ab" style="left:0;top:314.2px;width:904px;height:39.27px;background:#f0f0fd"></div>
<div class="ab" style="left:0;top:352.4px;width:904px;height:1px;background:#d6d6f6"></div>
<div class="ab" style="left:13px;top:314.2px;width:1px;height:39.27px;background:#dadaf8"></div>
<div class="ab" style="left:27px;top:314.2px;width:1px;height:39.27px;background:#dadaf8"></div>
<div class="ab" style="left:40px;top:314.2px;width:1px;height:39.27px;background:#dadaf8"></div>
<div class="ab" style="left:200px;top:314.2px;width:1px;height:39.27px;background:#dadaf8"></div>
<div class="ab" style="left:387px;top:314.2px;width:1px;height:39.27px;background:#dadaf8"></div>
<div class="ab" style="left:494px;top:314.2px;width:1px;height:39.27px;background:#dadaf8"></div>
<div class="ab" style="left:627px;top:314.2px;width:1px;height:39.27px;background:#dadaf8"></div>
<div class="ab" style="left:736px;top:314.2px;width:1px;height:39.27px;background:#dadaf8"></div>
<div class="ab" style="left:846px;top:314.2px;width:1px;height:39.27px;background:#dadaf8"></div>
<div class="t v" style="left:43.0px;top:315.8px;color:#000">ReJa01</div>
<div class="t v vd" style="left:43.0px;top:327.8px;color:#000">9000554179320</div>
<div class="t v" style="left:203.0px;top:315.8px;color:#000">Regen Jacke</div>
<div class="t v" style="left:390.2px;top:315.8px;color:#000">Wind- und</div>
<div class="t v" style="left:390.2px;top:327.8px;color:#000">Regenabweisend</div>
<div class="t v" style="left:497.0px;top:315.8px;color:#000">Bekleidung</div>
<div class="t v" style="left:497.0px;top:327.8px;color:#000">Jacke</div>
<div class="t v vd" style="right:167.4px;top:315.8px;color:#000">0.00</div>
<div class="t v" style="left:738.6px;top:315.8px;color:#000">Jacke</div>
<div class="t v vd" style="right:0.8px;top:315.8px;color:#000">174</div>
<div class="t v" style="left:898.4px;top:327.8px;color:#000">CHF</div>
<div class="t v" style="left:881.6px;top:339.8px;color:#000">pro Stk</div>
<div class="ab" style="left:0;top:353.4px;width:904px;height:39.27px;background:#ffffff"></div>
<div class="ab" style="left:0;top:391.7px;width:904px;height:1px;background:#d6d6f6"></div>
<div class="ab" style="left:13px;top:353.4px;width:1px;height:39.27px;background:#dadaf8"></div>
<div class="ab" style="left:27px;top:353.4px;width:1px;height:39.27px;background:#dadaf8"></div>
<div class="ab" style="left:40px;top:353.4px;width:1px;height:39.27px;background:#dadaf8"></div>
<div class="ab" style="left:200px;top:353.4px;width:1px;height:39.27px;background:#dadaf8"></div>
<div class="ab" style="left:387px;top:353.4px;width:1px;height:39.27px;background:#dadaf8"></div>
<div class="ab" style="left:494px;top:353.4px;width:1px;height:39.27px;background:#dadaf8"></div>
<div class="ab" style="left:627px;top:353.4px;width:1px;height:39.27px;background:#dadaf8"></div>
<div class="ab" style="left:736px;top:353.4px;width:1px;height:39.27px;background:#dadaf8"></div>
<div class="ab" style="left:846px;top:353.4px;width:1px;height:39.27px;background:#dadaf8"></div>
<div class="t v" style="left:43.0px;top:355.0px;color:#000">Shirt01b</div>
<div class="t v vd" style="left:43.0px;top:367.0px;color:#000">5000144692261</div>
<div class="t v" style="left:203.0px;top:355.0px;color:#000">T-Shirt blau</div>
<div class="t v" style="left:390.2px;top:355.0px;color:#000">Grösse: M</div>
<div class="t v" style="left:390.2px;top:367.0px;color:#000">Aufdruck hinten</div>
<div class="t v" style="left:497.0px;top:355.0px;color:#000">Bekleidung</div>
<div class="t v" style="left:497.0px;top:367.0px;color:#000">Shirt</div>
<div class="t v vd" style="right:167.4px;top:355.0px;color:#000">0.00</div>
<div class="t v" style="left:738.6px;top:355.0px;color:#000">Shirt</div>
<div class="t v vd" style="right:0.8px;top:355.0px;color:#000">49</div>
<div class="t v" style="left:898.4px;top:367.0px;color:#000">CHF</div>
<div class="t v" style="left:881.6px;top:379.0px;color:#000">pro Stk</div>
<div class="ab" style="left:0;top:392.7px;width:904px;height:39.27px;background:#f0f0fd"></div>
<div class="ab" style="left:0;top:431.0px;width:904px;height:1px;background:#d6d6f6"></div>
<div class="ab" style="left:13px;top:392.7px;width:1px;height:39.27px;background:#dadaf8"></div>
<div class="ab" style="left:27px;top:392.7px;width:1px;height:39.27px;background:#dadaf8"></div>
<div class="ab" style="left:40px;top:392.7px;width:1px;height:39.27px;background:#dadaf8"></div>
<div class="ab" style="left:200px;top:392.7px;width:1px;height:39.27px;background:#dadaf8"></div>
<div class="ab" style="left:387px;top:392.7px;width:1px;height:39.27px;background:#dadaf8"></div>
<div class="ab" style="left:494px;top:392.7px;width:1px;height:39.27px;background:#dadaf8"></div>
<div class="ab" style="left:627px;top:392.7px;width:1px;height:39.27px;background:#dadaf8"></div>
<div class="ab" style="left:736px;top:392.7px;width:1px;height:39.27px;background:#dadaf8"></div>
<div class="ab" style="left:846px;top:392.7px;width:1px;height:39.27px;background:#dadaf8"></div>
<div class="t v" style="left:43.0px;top:394.3px;color:#000">Shirt01g</div>
<div class="t v vd" style="left:43.0px;top:406.3px;color:#000">5000144692264</div>
<div class="t v" style="left:203.0px;top:394.3px;color:#000">T-Shirt gelb</div>
<div class="t v" style="left:390.2px;top:394.3px;color:#000">Grösse: M</div>
<div class="t v" style="left:390.2px;top:406.3px;color:#000">Aufdruck hinten</div>
<div class="t v" style="left:497.0px;top:394.3px;color:#000">Bekleidung</div>
<div class="t v" style="left:497.0px;top:406.3px;color:#000">Shirt</div>
<div class="t v vd" style="right:167.4px;top:394.3px;color:#000">0.00</div>
<div class="t v" style="left:738.6px;top:394.3px;color:#000">Shirt</div>
<div class="t v vd" style="right:0.8px;top:394.3px;color:#000">49</div>
<div class="t v" style="left:898.4px;top:406.3px;color:#000">CHF</div>
<div class="t v" style="left:881.6px;top:418.3px;color:#000">pro Stk</div>
<div class="ab" style="left:0;top:432.0px;width:904px;height:39.27px;background:#ffffff"></div>
<div class="ab" style="left:0;top:470.2px;width:904px;height:1px;background:#d6d6f6"></div>
<div class="ab" style="left:13px;top:432.0px;width:1px;height:39.27px;background:#dadaf8"></div>
<div class="ab" style="left:27px;top:432.0px;width:1px;height:39.27px;background:#dadaf8"></div>
<div class="ab" style="left:40px;top:432.0px;width:1px;height:39.27px;background:#dadaf8"></div>
<div class="ab" style="left:200px;top:432.0px;width:1px;height:39.27px;background:#dadaf8"></div>
<div class="ab" style="left:387px;top:432.0px;width:1px;height:39.27px;background:#dadaf8"></div>
<div class="ab" style="left:494px;top:432.0px;width:1px;height:39.27px;background:#dadaf8"></div>
<div class="ab" style="left:627px;top:432.0px;width:1px;height:39.27px;background:#dadaf8"></div>
<div class="ab" style="left:736px;top:432.0px;width:1px;height:39.27px;background:#dadaf8"></div>
<div class="ab" style="left:846px;top:432.0px;width:1px;height:39.27px;background:#dadaf8"></div>
<div class="t v" style="left:43.0px;top:433.6px;color:#000">Shirt01o</div>
<div class="t v vd" style="left:43.0px;top:445.6px;color:#000">5000144692262</div>
<div class="t v" style="left:203.0px;top:433.6px;color:#000">T-Shirt orange</div>
<div class="t v" style="left:390.2px;top:433.6px;color:#000">Grösse: M</div>
<div class="t v" style="left:390.2px;top:445.6px;color:#000">Aufdruck hinten</div>
<div class="t v" style="left:497.0px;top:433.6px;color:#000">Bekleidung</div>
<div class="t v" style="left:497.0px;top:445.6px;color:#000">Shirt</div>
<div class="t v vd" style="right:167.4px;top:433.6px;color:#000">0.00</div>
<div class="t v" style="left:738.6px;top:433.6px;color:#000">Shirt</div>
<div class="t v vd" style="right:0.8px;top:433.6px;color:#000">49</div>
<div class="t v" style="left:898.4px;top:445.6px;color:#000">CHF</div>
<div class="t v" style="left:881.6px;top:457.6px;color:#000">pro Stk</div>
<div class="ab" style="left:0;top:471.2px;width:904px;height:39.27px;background:#f0f0fd"></div>
<div class="ab" style="left:0;top:509.5px;width:904px;height:1px;background:#d6d6f6"></div>
<div class="ab" style="left:13px;top:471.2px;width:1px;height:39.27px;background:#dadaf8"></div>
<div class="ab" style="left:27px;top:471.2px;width:1px;height:39.27px;background:#dadaf8"></div>
<div class="ab" style="left:40px;top:471.2px;width:1px;height:39.27px;background:#dadaf8"></div>
<div class="ab" style="left:200px;top:471.2px;width:1px;height:39.27px;background:#dadaf8"></div>
<div class="ab" style="left:387px;top:471.2px;width:1px;height:39.27px;background:#dadaf8"></div>
<div class="ab" style="left:494px;top:471.2px;width:1px;height:39.27px;background:#dadaf8"></div>
<div class="ab" style="left:627px;top:471.2px;width:1px;height:39.27px;background:#dadaf8"></div>
<div class="ab" style="left:736px;top:471.2px;width:1px;height:39.27px;background:#dadaf8"></div>
<div class="ab" style="left:846px;top:471.2px;width:1px;height:39.27px;background:#dadaf8"></div>
<div class="t v" style="left:43.0px;top:472.8px;color:#000">Shirt01s</div>
<div class="t v vd" style="left:43.0px;top:484.8px;color:#000">5000144692266</div>
<div class="t v" style="left:203.0px;top:472.8px;color:#000">T-Shirt schwarz</div>
<div class="t v" style="left:390.2px;top:472.8px;color:#000">Grösse: M</div>
<div class="t v" style="left:390.2px;top:484.8px;color:#000">Aufdruck hinten</div>
<div class="t v" style="left:497.0px;top:472.8px;color:#000">Bekleidung</div>
<div class="t v" style="left:497.0px;top:484.8px;color:#000">Shirt</div>
<div class="t v vd" style="right:167.4px;top:472.8px;color:#000">0.00</div>
<div class="t v" style="left:738.6px;top:472.8px;color:#000">Shirt</div>
<div class="t v vd" style="right:0.8px;top:472.8px;color:#000">49</div>
<div class="t v" style="left:898.4px;top:484.8px;color:#000">CHF</div>
<div class="t v" style="left:881.6px;top:496.8px;color:#000">pro Stk</div>
</div>
<div class="ab" style="left:1142.5px;top:158px;width:14.5px;height:506px;background:#f0f0f0"></div>
<div class="ab" style="left:1143px;top:174px;width:13px;height:243px;background:#cdcdcd"></div>
<svg class="ab" style="left:1145px;top:162px" width="10" height="7" viewBox="0 0 10 7" ><path d="M1.5 5.5 L5 2 L8.5 5.5" fill="none" stroke="#505050" stroke-width="1.6"/></svg>
<svg class="ab" style="left:1145px;top:652px" width="10" height="8" viewBox="0 0 10 8" ><path d="M1.5 2 L5 5.5 L8.5 2" fill="none" stroke="#505050" stroke-width="1.6"/></svg>
<div class="ab" style="left:239px;top:664px;width:918px;height:15px;background:#f0f0f0"></div>
<div class="ab" style="left:296px;top:665px;width:195px;height:13px;background:#cdcdcd"></div>
<svg class="ab" style="left:283px;top:667px" width="8" height="9" viewBox="0 0 8 9" ><path d="M6 1 L2.5 4.5 L6 8" fill="none" stroke="#505050" stroke-width="1.6"/></svg>
<svg class="ab" style="left:1131px;top:667px" width="8" height="9" viewBox="0 0 8 9" ><path d="M2 1 L5.5 4.5 L2 8" fill="none" stroke="#505050" stroke-width="1.6"/></svg>
<div class="ab" style="left:1151px;top:673px;width:8px;height:8px;background:#f0f0f0"></div>
<div class="ab" style="left:1163px;top:680px;width:1.5px;height:1.5px;background:#b8b8b8"></div>
<div class="ab" style="left:1160px;top:683px;width:1.5px;height:1.5px;background:#b8b8b8"></div>
<div class="ab" style="left:1163px;top:683px;width:1.5px;height:1.5px;background:#b8b8b8"></div>
<div class="ab" style="left:1157px;top:686px;width:1.5px;height:1.5px;background:#b8b8b8"></div>
<div class="ab" style="left:1160px;top:686px;width:1.5px;height:1.5px;background:#b8b8b8"></div>
<div class="ab" style="left:1163px;top:686px;width:1.5px;height:1.5px;background:#b8b8b8"></div>
</body></html>
